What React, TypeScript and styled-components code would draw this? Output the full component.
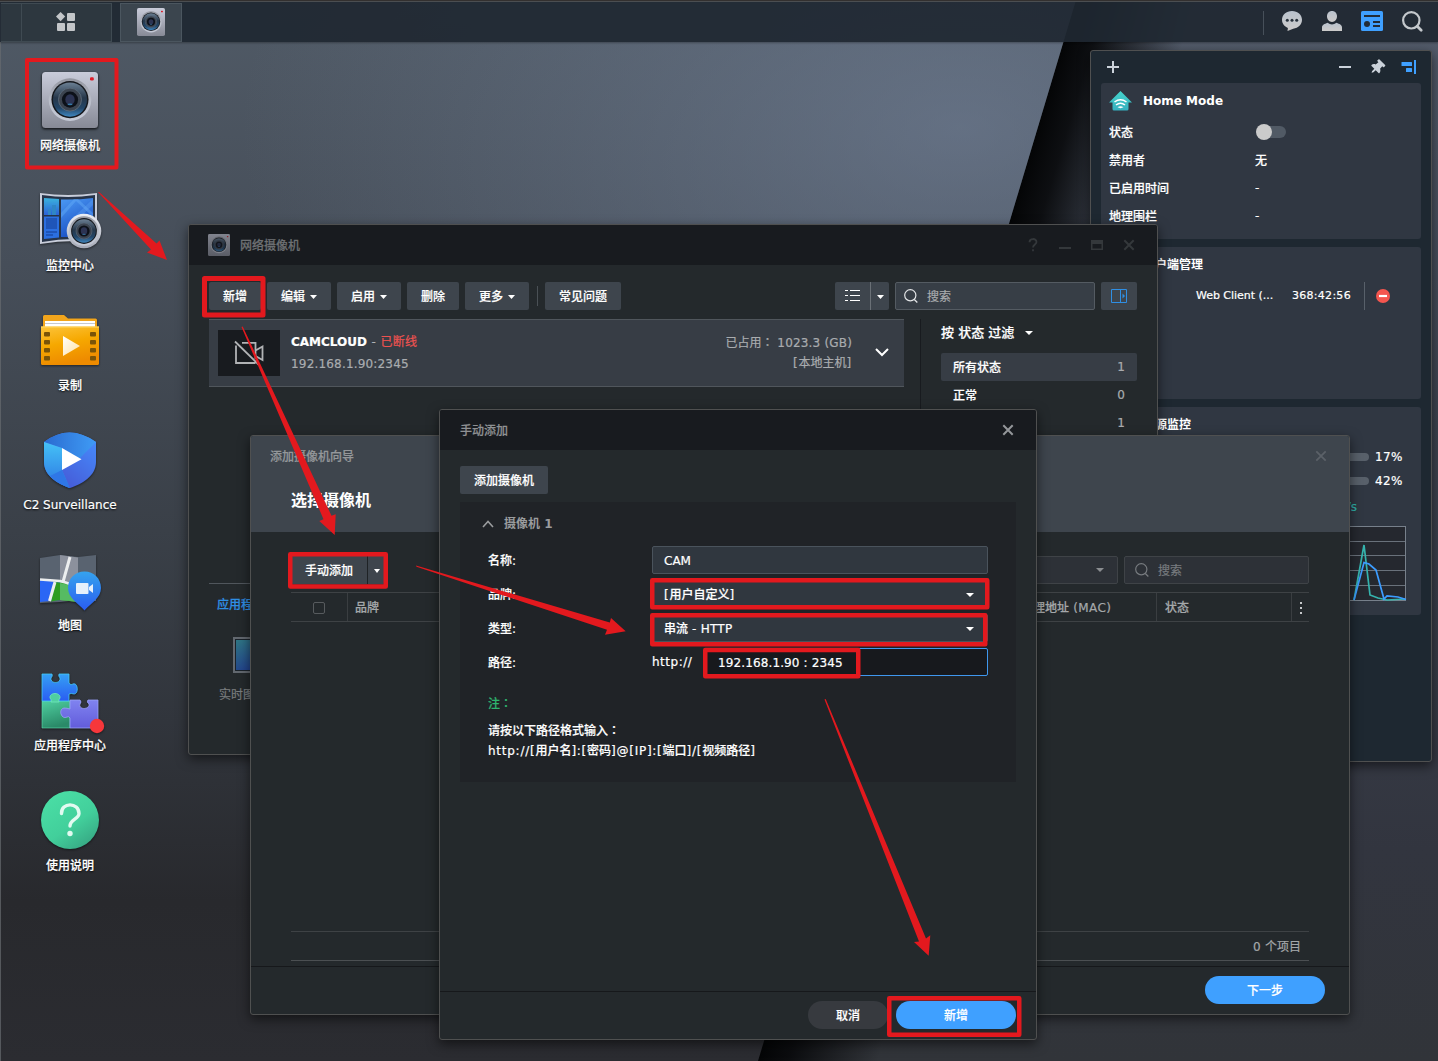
import React from 'react';
import styled, { createGlobalStyle, css } from 'styled-components';
import { FaThumbtack } from 'react-icons/fa';

const RED = '#e3191e';
const BLUE = '#3fa0ff';

const GlobalStyle = createGlobalStyle`
  *, *::before, *::after { box-sizing: border-box; }
  body {
    margin: 0;
    overflow: hidden;
    background: #2a2c30;
    font-family: "DejaVu Sans", "Noto Sans CJK SC", sans-serif;
    font-size: 12px;
    line-height: 20px;
    color: #fff;
    -webkit-text-stroke: 0.2px;
  }
  button, input { font: inherit; color: inherit; }
  svg { display: block; flex: none; overflow: visible; }
`;

/* ---------- desktop ---------- */

const Desktop = styled.div`
  position: relative;
  width: 1438px;
  height: 1061px;
  overflow: hidden;
  display: flex;
  flex-direction: column;
`;

const WallpaperSvg = styled.svg`
  position: absolute;
  inset: 0;
`;

const Taskbar = styled.header`
  position: relative;
  display: flex;
  height: 42px;
  flex: none;
  padding: 2px 14px 0 1px;
  border-top: 1px solid #33302f;
  background: rgba(31, 40, 50, 0.93);
  box-shadow: 0 1px 2px rgba(0, 0, 0, 0.3), inset 0 1px 0 #4b4e51;
`;

const TaskCell = styled.div<{ $w: number; $active?: boolean; $gap?: number }>`
  width: ${p => p.$w}px;
  margin-right: ${p => p.$gap ?? 0}px;
  padding: 0 ${p => (p.$active ? 0 : 2)}px 2px 0;
  display: flex;
  align-items: center;
  justify-content: center;
  border: 1px solid ${p => (p.$active ? '#4b565f' : '#3f4a52')};
  border-left-width: ${p => (p.$active ? 1 : 0)}px;
  background: ${p => (p.$active ? '#3b454e' : '#2d373f')};
`;

const Tray = styled.div`
  margin-left: auto;
  display: flex;
  align-items: center;
  gap: 16px;
  padding: 0 0 3px 17px;
  &::before {
    content: '';
    width: 1px;
    height: 24px;
    margin-top: 3px;
    background: #47505a;
  }
`;

const IconColumn = styled.nav`
  position: relative;
  display: flex;
  flex-direction: column;
  width: 140px;
  padding-top: 18px;
`;

const Shortcut = styled.div`
  height: 120px;
  padding-top: 8px;
  display: flex;
  flex-direction: column;
  align-items: center;
  svg { filter: drop-shadow(0 1px 1px rgba(0, 0, 0, 0.5)); }
`;

const ShortcutLabel = styled.span<{ $latin: boolean }>`
  margin-top: ${p => (p.$latin ? 3 : 4)}px;
  font-weight: 500;
  white-space: nowrap;
  text-shadow: 0 1px 2px rgba(0, 0, 0, 0.9);
`;

/* ---------- windows ---------- */

const Window = styled.section<{ $x: number; $y: number; $w: number; $h: number; $bg?: string }>`
  position: absolute;
  left: ${p => p.$x}px;
  top: ${p => p.$y}px;
  width: ${p => p.$w}px;
  height: ${p => p.$h}px;
  display: flex;
  flex-direction: column;
  overflow: hidden;
  border: 1px solid #4f5050;
  border-radius: 3px;
  background: ${p => p.$bg ?? '#24292c'};
  box-shadow: 0 4px 12px rgba(0, 0, 0, 0.55);
`;

const TitleBar = styled.header<{ $light?: boolean; $left?: number }>`
  flex: none;
  display: flex;
  align-items: center;
  gap: 10px;
  height: 40px;
  padding: 0 22px 0 ${p => p.$left ?? 19}px;
  background: ${p => (p.$light ? '#3e454d' : '#181b1f')};
  font-weight: 500;
`;

const Title = styled.span<{ $color?: string }>`
  margin-right: auto;
  padding-top: 1px;
  color: ${p => p.$color ?? '#a1a3a5'};
`;

const WindowControls = styled.div`
  display: flex;
  align-items: center;
  gap: 20px;
  color: #34383b;
`;

const Toolbar = styled.div`
  display: flex;
  align-items: center;
  gap: 6px;
  height: 28px;
  flex: none;
`;

const Button = styled.button<{ $w?: number }>`
  height: 28px;
  width: ${p => (p.$w ? `${p.$w}px` : 'auto')};
  padding: 1px ${p => (p.$w ? 0 : 14)}px 0;
  display: flex;
  align-items: center;
  justify-content: center;
  gap: 5px;
  flex: none;
  border: 0;
  border-radius: 2px;
  background: #3e454d;
  color: #fff;
  font-weight: 500;
  white-space: nowrap;
`;

const Split = styled.div`
  display: flex;
  height: 28px;
  flex: none;
  border-radius: 2px;
  overflow: hidden;
  ${Button} { border-radius: 0; }
`;

const SplitArrow = styled(Button)<{ $line: string }>`
  border-left: 1px solid ${p => p.$line};
`;

const PillButton = styled.button<{ $w: number; $primary?: boolean }>`
  width: ${p => p.$w}px;
  height: 28px;
  padding: 1px 0 0;
  border: 0;
  border-radius: 14px;
  background: ${p => (p.$primary ? BLUE : '#373a3f')};
  color: #fff;
  font-weight: 500;
`;

const Separator = styled.i`
  width: 1px;
  height: 20px;
  margin: 0 1px 0 2px;
  background: #4a5055;
`;

const Spacer = styled.div`
  flex: 1;
`;

const SearchBox = styled.div<{ $w: number; $dim?: boolean }>`
  display: flex;
  align-items: center;
  gap: 9px;
  width: ${p => p.$w}px;
  height: 28px;
  flex: none;
  padding: 1px ${p => (p.$dim ? 10 : 8)}px 0;
  border: 1px solid ${p => (p.$dim ? '#3f4347' : '#545b62')};
  border-radius: 2px;
  background: ${p => (p.$dim ? '#2d3137' : '#373e46')};
  color: ${p => (p.$dim ? '#777b7f' : '#a8abad')};
  svg { margin-top: -1px; }
`;

/* ---------- camera list ---------- */

const MainBody = styled.div`
  flex: 1;
  display: flex;
  flex-direction: column;
  padding: 17px 20px 0 20px;
`;

const MainColumns = styled.div`
  flex: 1;
  display: flex;
  margin-top: 9px;
`;

const ListPane = styled.div`
  width: 695px;
  display: flex;
  flex-direction: column;
`;

const CameraRow = styled.div`
  display: flex;
  align-items: center;
  height: 68px;
  flex: none;
  padding: 0 15px 0 9px;
  border: solid #50565c;
  border-width: 1px 0;
  background: #373d45;
  & > svg { margin-top: -2px; }
`;

const Thumb = styled.div`
  width: 62px;
  height: 46px;
  margin-right: 11px;
  display: flex;
  align-items: center;
  justify-content: center;
  background: #181b1f;
`;

const Lines = styled.div<{ $right?: boolean }>`
  display: flex;
  flex-direction: column;
  gap: ${p => (p.$right ? 0 : 2)}px;
  margin-bottom: ${p => (p.$right ? 2 : 1)}px;
  color: #a9acaf;
  ${p =>
    p.$right &&
    css`
      margin-left: auto;
      margin-right: 23px;
      text-align: right;
    `}
`;

const CameraName = styled.div`
  color: #b0b3b5;
  white-space: pre;
  word-spacing: 0.8px;
  b { color: #fff; }
  em { font-style: normal; color: #ee5250; letter-spacing: 0.2px; }
`;

const Latin = styled.span<{ $ls?: number }>`
  letter-spacing: ${p => p.$ls ?? 0.18}px;
`;

/* Widens only the ASCII runs of a mixed string. */
const Mixed = ({ text, ls }: { text: string; ls: number }) => (
  <span>
    {text.split(/([\x20-\x7e]+)/).map((run, i) => (i % 2 ? <Latin key={i} $ls={ls}>{run}</Latin> : run))}
  </span>
);

/* Full-width punctuation that sits in the middle of its box. */
const MidColon = styled.span`
  font-family: "Noto Sans CJK TC", sans-serif;
`;

const DetailPane = styled.div`
  margin-top: 196px;
  height: 171px;
  border-top: 1px solid #50565c;
  padding: 11px 8px;
  display: flex;
  flex-direction: column;
`;

const DetailTab = styled.div`
  color: #2f8fe4;
  font-weight: 500;
`;

const DetailItem = styled.div`
  display: flex;
  flex-direction: column;
  width: 72px;
  margin: 22px 0 0 2px;
  color: #797c7e;
  gap: 12px;
  svg { margin-left: 14px; }
`;

const FilterPane = styled.div`
  flex: 1;
  margin-left: 16px;
  padding-left: 20px;
  border-left: 1px solid #181b1f;
`;

const FilterTitle = styled.div`
  display: flex;
  align-items: center;
  gap: 11px;
  height: 28px;
  margin-bottom: 6px;
  font-size: 13px;
  font-weight: 500;
`;

const FilterRow = styled.div<{ $on?: boolean }>`
  display: flex;
  justify-content: space-between;
  align-items: center;
  height: 28px;
  padding: 0 12px;
  border-radius: 2px;
  font-weight: 500;
  background: ${p => (p.$on ? '#373d45' : 'transparent')};
`;

const FilterName = styled.span`
  padding-top: 1px;
`;

const FilterCount = styled.span`
  color: #a9acaf;
`;

/* ---------- wizard ---------- */

const WizardHead = styled.div`
  flex: none;
  height: 56px;
  padding: 13px 40px;
  background: #3e454d;
  font-size: 16px;
  font-weight: 700;
  line-height: 24px;
  -webkit-text-stroke: 0;
`;

const WizardBody = styled.div`
  flex: 1;
  display: flex;
  flex-direction: column;
  padding: 24px 40px 5px 40px;
`;

const Combo = styled.div`
  display: flex;
  justify-content: flex-end;
  align-items: center;
  width: 160px;
  height: 28px;
  padding-right: 13px;
  border: 1px solid #3f4347;
  border-radius: 2px;
  background: #2d3137;
  color: #8b8e91;
`;

const TableHead = styled.div`
  display: grid;
  grid-template-columns: 56px 656px 153px 135px 18px;
  height: 30px;
  margin-top: 8px;
  flex: none;
  border: solid #3e4245;
  border-width: 1px 0;
  color: #a5a8aa;
  font-weight: 500;
`;

const Th = styled.div<{ $center?: boolean; $left?: number }>`
  display: flex;
  align-items: center;
  justify-content: ${p => (p.$center ? 'center' : 'flex-start')};
  padding-left: ${p => (p.$center ? 0 : p.$left ?? 8)}px;
  padding-top: 1px;
  white-space: nowrap;
  & + & { border-left: 1px solid #3a3e41; }
`;

const CheckBox = styled.i`
  width: 12px;
  height: 12px;
  border: 1px solid #575b5e;
  border-radius: 2px;
`;

const Paging = styled.div`
  margin-top: auto;
  height: 30px;
  display: flex;
  align-items: center;
  justify-content: flex-end;
  padding: 1px 8px 0 0;
  border: solid #3e4245;
  border-width: 1px 0;
  border-bottom-color: #4b4f52;
  color: #a5a8aa;
`;

const Footer = styled.footer<{ $pad: number }>`
  flex: none;
  display: flex;
  justify-content: flex-end;
  gap: 8px;
  height: 48px;
  padding: 9px ${p => p.$pad}px 0;
  border-top: 1px solid #16181b;
`;

/* ---------- manual dialog ---------- */

const DialogBody = styled.div`
  flex: 1;
  display: flex;
  flex-direction: column;
  align-items: flex-start;
  gap: 8px;
  padding: 16px 20px 0 20px;
`;

const FormPanel = styled.div`
  align-self: stretch;
  height: 280px;
  padding: 8px 28px;
  background: #202327;
  font-weight: 500;
`;

const FormLegend = styled.div`
  display: flex;
  align-items: center;
  gap: 9px;
  height: 28px;
  margin-left: -6px;
  margin-bottom: 5px;
  color: #9a9c9e;
  font-weight: 700;
  -webkit-text-stroke: 0;
  svg { margin-right: 1px; }
`;

const FormRow = styled.div`
  display: flex;
  align-items: center;
  height: 34px;
`;

const FormLabel = styled.label`
  width: 164px;
  padding-top: 1px;
`;

const Field = styled.div<{ $focus?: boolean }>`
  flex: 1;
  display: flex;
  align-items: center;
  justify-content: space-between;
  height: 28px;
  padding: 1px 13px 0 ${p => (p.$focus ? 13 : 11)}px;
  border: 1px solid ${p => (p.$focus ? '#3f97ee' : '#4a535c')};
  border-radius: 2px;
  background: ${p => (p.$focus ? '#17191d' : '#30373f')};
  white-space: pre;
`;

const Prefix = styled.span`
  width: 52px;
  letter-spacing: 0.5px;
`;

const Note = styled.div`
  margin-top: 14px;
  strong { display: block; font-weight: 500; color: #2fb56f; margin-bottom: 6px; }
  p { margin: 0; white-space: nowrap; }
`;

/* ---------- widgets ---------- */

const WidgetHead = styled.div`
  display: flex;
  align-items: center;
  height: 32px;
  flex: none;
  padding: 0 15px;
  gap: 18px;
  color: #cbd2da;
`;

const PinIcon = styled(FaThumbtack)`
  width: 14px;
  height: 15px;
  transform: rotate(45deg);
`;

const WidgetCard = styled.div<{ $h: number }>`
  flex: none;
  height: ${p => p.$h}px;
  margin: 0 10px 8px;
  padding: 4px 8px;
  border-radius: 3px;
  background: #303742;
  font-weight: 500;
`;

const CardTitle = styled.div<{ $mb?: number }>`
  display: flex;
  align-items: center;
  gap: 11px;
  height: 28px;
  margin-bottom: ${p => p.$mb ?? 0}px;
  font-weight: 700;
  -webkit-text-stroke: 0;
`;

const InfoRow = styled.div`
  display: grid;
  grid-template-columns: 146px 1fr;
  align-items: center;
  height: 28px;
`;

const InfoText = styled.span`
  padding-top: 1px;
`;

const Toggle = styled.i`
  width: 29px;
  height: 12px;
  margin-left: 2px;
  border-radius: 6px;
  background: #515a65;
  display: flex;
  align-items: center;
  &::before {
    content: '';
    width: 16px;
    height: 16px;
    margin-left: -1px;
    border-radius: 50%;
    background: #cbcbcb;
  }
`;

const ClientRow = styled.div`
  display: flex;
  align-items: center;
  height: 28px;
  margin-top: 3px;
  padding-left: 87px;
  font-size: 11px;
  font-weight: 400;
  i { width: 1px; height: 28px; margin: 0 11px 0 13px; background: #58606a; }
`;

const ClientName = styled.span`
  width: 96px;
  letter-spacing: -0.03px;
`;

const UsageRow = styled.div`
  display: grid;
  grid-template-columns: 70px 1fr 38px;
  align-items: center;
  height: 24px;
  font-weight: 400;
`;

const Meter = styled.i`
  height: 8px;
  margin-right: 6px;
  border-radius: 4px;
  background: #58606a;
`;

const Rate = styled.div`
  height: 28px;
  margin-bottom: 5px;
  padding-right: 56px;
  text-align: right;
  color: #2fb0aa;
  font-weight: 400;
  line-height: 28px;
`;

const AnnotationSvg = styled.svg`
  position: absolute;
  inset: 0;
  pointer-events: none;
`;

/* ---------- icons ---------- */

const Caret = ({ color = '#fff', w = 7 }: { color?: string; w?: number }) => (
  <svg width={w} height={4} viewBox="0 0 8 4" preserveAspectRatio="none"><path d="M0 0h8L4 4z" fill={color} /></svg>
);

const Close = ({ color = 'currentColor', sw = 2 }: { color?: string; sw?: number }) => (
  <svg width="12" height="12" viewBox="0 0 12 12"><path d="M1.300 1.300l9.400 9.400M10.700 1.300l-9.400 9.400" stroke={color} strokeWidth={sw} /></svg>
);

const Search = ({ size = 14, color = '#e4e6e8', sw = 1.2 }: { size?: number; color?: string; sw?: number }) => (
  <svg width={size} height={size} viewBox="0 0 14 14" fill="none" stroke={color} strokeWidth={sw}>
    <circle cx="6.300" cy="6.300" r="5.600" /><path d="M10.300 10.500l3 3" />
  </svg>
);

const Lens = ({ cx, cy, r }: { cx: number; cy: number; r: number }) => (
  <g>
    <circle cx={cx} cy={cy} r={r} fill="url(#ringG)" />
    <circle cx={cx} cy={cy} r={r * 0.87} fill="#15181d" />
    <circle cx={cx} cy={cy} r={r * 0.8} fill="url(#lensG)" />
    <circle cx={cx} cy={cy} r={r * 0.54} fill="#3c4450" />
    <circle cx={cx} cy={cy} r={r * 0.54} fill="none" stroke="#5d6d7e" strokeWidth={r * 0.04} />
    <circle cx={cx} cy={cy} r={r * 0.38} fill="#0d1119" />
    <ellipse cx={cx} cy={cy} rx={r * 0.22} ry={r * 0.25} fill="#2c3352" />
    <ellipse cx={cx} cy={cy + r * 0.22} rx={r * 0.12} ry={r * 0.04} fill="#3579a8" />
  </g>
);

const CameraIcon = ({ size, dim }: { size: number; dim?: boolean }) => (
  <svg width={size} height={size} viewBox="0 0 56 56" opacity={dim ? 0.6 : 1}>
    <rect width="56" height="56" rx="3.500" fill="url(#bodyG)" />
    <Lens cx={28} cy={27.6} r={21.3} />
    <rect x="48" y="5.300" width="3.800" height="3.200" rx="1.200" fill="#dd1c28" />
  </svg>
);

const Defs = () => (
  <svg width="0" height="0" style={{ position: 'absolute' }}>
    <defs>
      <linearGradient id="bodyG" x2="0" y2="1"><stop stopColor="#c9ccda" /><stop offset="1" stopColor="#878a96" /></linearGradient>
      <linearGradient id="ringG" x2="0" y2="1"><stop stopColor="#92959f" /><stop offset=".5" stopColor="#b9bdc8" /><stop offset="1" stopColor="#c4c9d6" /></linearGradient>
      <linearGradient id="ringW" x2="0" y2="1"><stop stopColor="#eceff5" /><stop offset="1" stopColor="#a5a9b6" /></linearGradient>
      <linearGradient id="lensG" x2="0" y2="1"><stop stopColor="#6b7f93" /><stop offset=".45" stopColor="#26374a" /><stop offset=".75" stopColor="#234668" /><stop offset="1" stopColor="#3f86bf" /></linearGradient>
      <linearGradient id="wallG" x2=".4" y2="1"><stop stopColor="#4c9bf5" /><stop offset="1" stopColor="#1a4fc4" /></linearGradient>
      <linearGradient id="cyanG" x2="0" y2="1"><stop stopColor="#3bb2dd" /><stop offset="1" stopColor="#2b62d8" /></linearGradient>
      <linearGradient id="liveG" x2=".5" y2="1"><stop stopColor="#2f7684" /><stop offset="1" stopColor="#213f8c" /></linearGradient>
      <linearGradient id="folderG" x2=".3" y2="1"><stop stopColor="#fcc43b" /><stop offset=".5" stopColor="#f6a800" /><stop offset="1" stopColor="#ee8b00" /></linearGradient>
      <linearGradient id="playG" x2="1" y2="1"><stop stopColor="#fff" /><stop offset="1" stopColor="#ffe0a0" /></linearGradient>
      <linearGradient id="shA"><stop stopColor="#2a6bd0" /><stop offset="1" stopColor="#3f9bf5" /></linearGradient>
      <linearGradient id="shB" x2="0" y2="1"><stop stopColor="#45c2f7" /><stop offset="1" stopColor="#2c76e2" /></linearGradient>
      <linearGradient id="shC" x1="1" x2=".2" y2="1"><stop stopColor="#4690ff" /><stop offset="1" stopColor="#4654d2" /></linearGradient>
      <linearGradient id="pinG" x2="0" y2="1"><stop stopColor="#35a3ee" /><stop offset="1" stopColor="#2a5cf0" /></linearGradient>
      <linearGradient id="pzB" x2="0" y2="1"><stop stopColor="#35a0f5" /><stop offset="1" stopColor="#2a5df2" /></linearGradient>
      <linearGradient id="pzG" x2=".3" y2="1"><stop stopColor="#4fcfa0" /><stop offset="1" stopColor="#2a8a68" /></linearGradient>
      <linearGradient id="pzP" x2="0" y2="1"><stop stopColor="#8083f0" /><stop offset="1" stopColor="#625cdb" /></linearGradient>
      <linearGradient id="helpG" x1=".1" x2=".8" y2="1"><stop stopColor="#4be0a6" /><stop offset=".6" stopColor="#42cf9b" /><stop offset="1" stopColor="#36a582" /></linearGradient>
      <linearGradient id="homeG" x2="0" y2="1"><stop stopColor="#45d3cb" /><stop offset="1" stopColor="#35b0bf" /></linearGradient>
      <linearGradient id="trayG" x2="0" y2="1"><stop stopColor="#b9c2cd" /><stop offset="1" stopColor="#cdcbca" /></linearGradient>
    </defs>
  </svg>
);

const DesktopIcon = ({ children }: { children: React.ReactNode }) => (
  <svg width="64" height="64" viewBox="0 0 64 64">{children}</svg>
);

const MonitorCenterIcon = () => (
  <DesktopIcon>
    <path d="M2 5Q30 9 59 5V54Q30 51 2 56z" fill="#c9cedb" />
    <path d="M4 7Q30 11 57 7V52Q30 49 4 54z" fill="#273449" />
    <path d="M6 10l15 1v16H6z" fill="url(#cyanG)" />
    <path d="M10 21h3v6h-3zM14 17h4v10h-4z" fill="#2f86c6" />
    <path d="M6 28.500h15v21l-15 1.500z" fill="#2b6fe0" />
    <path d="M8 30h11v11H8zM8 43h11v2H8zM8 46h7v2H8z" fill="#1f55b8" />
    <path d="M23 11.500Q40 12 55 10V49H23z" fill="url(#wallG)" />
    <path d="M23 30L38 13l17 16v-4L40 11h-4L23 25z" fill="#69b1fb" opacity=".4" />
    <path d="M55 11L37 28l3 3 15-14z" fill="#69b1fb" opacity=".3" />
    <circle cx="46" cy="43" r="17.300" fill="url(#ringW)" />
    <Lens cx={46} cy={43} r={14.8} />
  </DesktopIcon>
);

const RecordingIcon = () => (
  <DesktopIcon>
    <path d="M5 8.500Q5 7 6.500 7H26l4 3.500H57.500Q59 10.500 59 12v8H5z" fill="#f2a51c" />
    <path d="M7 13h50v8H7z" fill="#fff" /><path d="M7 15h50v1H7z" fill="#c7c9cf" />
    <path d="M3 18.500h58V55.500q0 1.500-1.500 1.500H4.500Q3 57 3 55.500z" fill="url(#folderG)" />
    <path d="M3 18.500h58v1H3z" fill="#ffd768" />
    {[24, 32, 40, 48].map(y => (
      <g key={y} fill="#7a5408">
        <rect x="6" y={y} width="6" height="4.500" rx="1" /><rect x="52" y={y} width="6" height="4.500" rx="1" />
      </g>
    ))}
    <path d="M25 28l17 10-17 10z" fill="url(#playG)" />
  </DesktopIcon>
);

const ShieldIcon = () => (
  <DesktopIcon>
    <path d="M6 14Q31-5 58 14V34C58 48 44 56 32 60 20 56 6 48 6 34z" fill="url(#shC)" />
    <path d="M6 14Q31-5 58 14L41 31 24 20z" fill="url(#shA)" />
    <path d="M6 14l18 6v22l8 18C20 56 6 48 6 34z" fill="url(#shB)" />
    <path d="M24 42l-12 6Q20 56 31.500 60z" fill="#2f77e6" />
    <path d="M24 20l19.500 11.200L24 42z" fill="#fff" />
  </DesktopIcon>
);

const MapIcon = () => (
  <DesktopIcon>
    <path d="M2 10l20-3 18 2 18-2v46l-18-1-18 2-20 1z" fill="#596370" />
    <path d="M22 7l18 2.500V54l-18-2z" fill="#8c919d" />
    <path d="M2 32l20 2v18L2 54z" fill="#2a66f5" />
    <path d="M17 34l10 1 13 5v14l-18-2-9 1.500z" fill="#2e9c22" />
    <path d="M22 35l18 4 3 15-21-2z" fill="#56bb62" />
    <path d="M2 31.500l20 1.500q12 3 18 7" stroke="#eceeef" strokeWidth="2.600" fill="none" />
    <path d="M32 9L25 34M17 34L11.500 53" stroke="#eceeef" strokeWidth="3" fill="none" />
    <path d="M46.500 23.500c9.500 0 16.500 7 16.500 16.500 0 10-10 15-16.500 22.500C40 55 30 50 30 40c0-9.500 7-16.500 16.500-16.500z" fill="url(#pinG)" />
    <rect x="38" y="35" width="12.500" height="11" rx="1" fill="#e6f0fb" />
    <path d="M51 39l4-3v9l-4-3z" fill="#e6f0fb" />
  </DesktopIcon>
);

const PuzzleIcon = () => (
  <DesktopIcon>
    <path d="M4 33H32V60H4z" fill="url(#pzG)" stroke="#5fe0b0" strokeWidth=".6" />
    <path d="M4 6h10q1 2-1 4c-1 6 10 6 9 0q-2-2-1-4h10v9q2 3 4 1c5-2 6 10 1 10q-3-1-5 0v7H4z" fill="url(#pzB)" stroke="#45c9f5" strokeWidth=".8" />
    <path d="M13 34q1-2-1-4c-1-6 11-6 10 0q-2 2-1 4z" fill="#4fcfa0" stroke="#72e8bd" strokeWidth=".8" />
    <path d="M32 32h10q2 2 0 4c-2 6 10 6 9 0q-3-2-1-4h10v28H32V50q-1-2-3-1c-6 3-9-8-3-9q3 0 6 1z" fill="url(#pzP)" stroke="#9aa2f7" strokeWidth=".8" />
    <circle cx="59" cy="58" r="7.200" fill="#f6373b" />
  </DesktopIcon>
);

const HelpIcon = () => (
  <DesktopIcon>
    <circle cx="32" cy="32" r="29" fill="url(#helpG)" />
    <path d="M23.500 25.500C23 14 41 14 41 25.500 41 31 32 31.500 32 38" stroke="#e2faf1" strokeWidth="3.400" strokeLinecap="round" fill="none" />
    <circle cx="32" cy="45.500" r="2.700" fill="#e2faf1" />
  </DesktopIcon>
);

const HomeIcon = () => (
  <svg width="23" height="20" viewBox="0 0 23 20">
    <path d="M11.500 0L23 11.500h-3.500V18q0 1.500-1.500 1.500H5Q3.500 19.500 3.500 18v-6.500H0z" fill="url(#homeG)" />
    <g fill="none" stroke="#fff" strokeWidth="1.500"><path d="M5.500 11q6-4.500 12 0M7 14q4.500-3.500 9 0" /></g>
    <path d="M8.500 16.300q3-2 6 0l-3 1z" fill="#fff" />
  </svg>
);

const ClientsIcon = () => (
  <svg width="23" height="18" viewBox="0 0 23 18" fill="none" stroke="#45b9e6" strokeWidth="2"><rect x="1" y="1" width="21" height="12" rx="1" /><path d="M6 17h11" /></svg>
);

const PulseIcon = () => (
  <svg width="23" height="18" viewBox="0 0 23 18" fill="none" stroke="#4fcf8a" strokeWidth="2"><path d="M0 10h6l3-8 5 14 3-6h6" /></svg>
);

const shortcuts: [string, React.ReactNode][] = [
  ['网络摄像机', <DesktopIcon key="c"><g transform="translate(4 4)"><CameraIcon size={56} /></g></DesktopIcon>],
  ['监控中心', <MonitorCenterIcon key="m" />],
  ['录制', <RecordingIcon key="r" />],
  ['C2 Surveillance', <ShieldIcon key="s" />],
  ['地图', <MapIcon key="p" />],
  ['应用程序中心', <PuzzleIcon key="z" />],
  ['使用说明', <HelpIcon key="h" />],
];

/* ---------- page parts ---------- */

const Wallpaper = () => (
  <WallpaperSvg width="1438" height="1061" viewBox="0 0 1438 1061">
    <defs>
      <linearGradient id="paper" x2="0" y2="1">
        <stop stopColor="#505a66" /><stop offset=".25" stopColor="#464e59" /><stop offset=".5" stopColor="#3a4048" />
        <stop offset=".68" stopColor="#31353c" /><stop offset=".85" stopColor="#28292d" /><stop offset="1" stopColor="#2b2c31" />
      </linearGradient>
      <radialGradient id="glow" gradientUnits="userSpaceOnUse" cx="960" cy="120" r="720" gradientTransform="matrix(1 0 0 .6 0 56)">
        <stop stopColor="#7887a0" stopOpacity=".55" /><stop offset="1" stopColor="#75849a" stopOpacity="0" />
      </radialGradient>
      <linearGradient id="under" x2="0" y2="1">
        <stop stopColor="#545d6c" /><stop offset=".4" stopColor="#3d434f" /><stop offset=".8" stopColor="#32353f" /><stop offset="1" stopColor="#313439" />
      </linearGradient>
      <linearGradient id="shade" gradientUnits="userSpaceOnUse" x1="1040" y1="120" x2="1150" y2="153">
        <stop stopColor="#040506" /><stop offset=".25" stopColor="#08090b" stopOpacity=".92" /><stop offset="1" stopColor="#08090b" stopOpacity="0" />
      </linearGradient>
    </defs>
    <rect width="1438" height="1061" fill="url(#under)" />
    <rect width="1438" height="1061" fill="url(#shade)" />
    <path d="M0 0H1076L758 1061H0z" fill="url(#paper)" />
    <path d="M0 0H1076L758 1061H0z" fill="url(#glow)" />
    <path d="M.5 0V1061" stroke="#686c70" opacity=".7" />
  </WallpaperSvg>
);

const WidgetPanel = () => (
  <Window $x={1090} $y={50} $w={342} $h={712} $bg="#1e2831">
    <WidgetHead>
      <svg width="14" height="14" viewBox="0 0 14 14"><path d="M7 1v12M1 7h12" stroke="currentColor" strokeWidth="2" /></svg>
      <Spacer />
      <svg width="14" height="14" viewBox="0 0 14 14"><path d="M1 7h12" stroke="currentColor" strokeWidth="2" /></svg>
      <PinIcon />
      <svg width="14" height="14" viewBox="0 0 14 14" fill={BLUE}><rect x="-.500" y="2" width="10.500" height="4" rx=".600" /><rect x="4" y="8" width="6" height="4" rx=".600" /><path d="M12 0h2v14h-2z" /></svg>
    </WidgetHead>
    <WidgetCard $h={156}>
      <CardTitle $mb={3}><HomeIcon />Home Mode</CardTitle>
      <InfoRow><InfoText>状态</InfoText><Toggle /></InfoRow>
      <InfoRow><InfoText>禁用者</InfoText><InfoText>无</InfoText></InfoRow>
      <InfoRow><InfoText>已启用时间</InfoText><span>-</span></InfoRow>
      <InfoRow><InfoText>地理围栏</InfoText><span>-</span></InfoRow>
    </WidgetCard>
    <WidgetCard $h={152}>
      <CardTitle><ClientsIcon />客户端管理</CardTitle>
      <ClientRow>
        <ClientName>Web Client (...</ClientName>
        <Latin $ls={0.28}>368:42:56</Latin>
        <i />
        <svg width="14" height="14" viewBox="0 0 14 14"><circle cx="7" cy="7" r="7" fill="#f4564f" /><path d="M3 7h8" stroke="#fff" strokeWidth="2.200" /></svg>
      </ClientRow>
    </WidgetCard>
    <WidgetCard $h={208}>
      <CardTitle $mb={6}><PulseIcon />资源监控</CardTitle>
      <UsageRow><span>CPU</span><Meter /><Latin $ls={0.4}>17%</Latin></UsageRow>
      <UsageRow><span>内存</span><Meter /><Latin $ls={0.4}>42%</Latin></UsageRow>
      <Rate>KB/s</Rate>
      <svg width="296" height="75" viewBox="1109 526 296 75" fill="none">
        <rect x="1110" y="526.500" width="295.500" height="74" fill="#25282f" stroke="#77808b" />
        <path d="M1110 541.500h295M1110 555.500h295M1110 570.500h295M1110 585.500h295" stroke="#69717b" />
        <path d="M1354 600l10-55 6 50 8 3 9 2 18-1" stroke="#35b3ad" strokeWidth="1.700" />
        <path d="M1354 600l10-37.500 5 1.500 7 6 8 29 3-3 11 1 8 2.500" stroke="#3c9cff" strokeWidth="1.700" />
      </svg>
    </WidgetCard>
  </Window>
);

const MainWindow = () => (
  <Window $x={188} $y={224} $w={970} $h={531}>
    <TitleBar>
      <CameraIcon size={22} dim />
      <Title $color="#6d7073">网络摄像机</Title>
      <WindowControls>
        <svg width="12" height="14" viewBox="0 0 12 14" fill="none" stroke="currentColor" strokeWidth="1.800"><path d="M2.500 4.200C2.500 0 9.500 0 9.500 4 9.500 6.500 6 6.500 6 9.500M6 11.300v2" /></svg>
        <svg width="12" height="12" viewBox="0 0 12 12"><path d="M0 9h12" stroke="currentColor" strokeWidth="2" /></svg>
        <svg width="12" height="10" viewBox="0 0 12 10"><path d="M0 0h12v10H0zM1.500 4v4.500h9V4z" fill="currentColor" fillRule="evenodd" /></svg>
        <Close />
      </WindowControls>
    </TitleBar>
    <MainBody>
      <Toolbar>
        <Button>新增</Button>
        <Button>编辑 <Caret /></Button>
        <Button>启用 <Caret /></Button>
        <Button>删除</Button>
        <Button>更多 <Caret /></Button>
        <Separator />
        <Button>常见问题</Button>
        <Spacer />
        <Split>
          <Button $w={35} aria-label="list">
            <svg width="15" height="12" viewBox="0 0 15 12" stroke="#fff" strokeWidth="1"><path d="M0 .5h3M5 .5h10M0 5.500h3M5 5.500h10M0 10.500h3M5 10.500h10" transform="translate(0 -1)" /></svg>
          </Button>
          <SplitArrow $w={19} $line="#6a7076"><Caret /></SplitArrow>
        </Split>
        <SearchBox $w={200}><Search />搜索</SearchBox>
        <Button $w={36} aria-label="panel">
          <svg width="16" height="14" viewBox="0 0 16 14" fill="none" stroke="#2f8fe4"><path d="M.5-.5h15v13H.5zM9.500-.5v13" /><path d="M11.500 3.500v5l2.500-2.500z" fill="#2f8fe4" stroke="none" /></svg>
        </Button>
      </Toolbar>
      <MainColumns>
        <ListPane>
          <CameraRow>
            <Thumb>
              <svg width="30" height="24" viewBox="0 0 30 24" fill="none" stroke="#b1b3b5" strokeWidth="1.800"><path d="M2 4.500V22h19.500M8 1.800h13.500V18M21.500 9.500l7-4v13.500l-7-4M1 .5l23.500 23" /></svg>
            </Thumb>
            <Lines>
              <CameraName><b>CAMCLOUD</b> - <em>已断线</em></CameraName>
              <Latin>192.168.1.90:2345</Latin>
            </Lines>
            <Lines $right>
              <div>已占用<MidColon>：</MidColon> <Latin>1023.3 (GB)</Latin></div>
              <div><Mixed text="[本地主机]" ls={0.8} /></div>
            </Lines>
            <svg width="14" height="9" viewBox="0 0 14 9"><path d="M1 1l6 6 6-6" stroke="#fff" strokeWidth="2" fill="none" /></svg>
          </CameraRow>
          <DetailPane>
            <DetailTab>应用程序</DetailTab>
            <DetailItem>
              <svg width="40" height="36" viewBox="0 0 40 36"><rect width="40" height="36" fill="#62686f" /><rect x="2" y="2" width="36" height="32" fill="#1b232b" /><rect x="3" y="3" width="34" height="30" fill="url(#liveG)" /></svg>
              实时图像
            </DetailItem>
          </DetailPane>
        </ListPane>
        <FilterPane>
          <FilterTitle>按 状态 过滤 <Caret w={8} /></FilterTitle>
          <FilterRow $on><FilterName>所有状态</FilterName><FilterCount>1</FilterCount></FilterRow>
          <FilterRow><FilterName>正常</FilterName><FilterCount>0</FilterCount></FilterRow>
          <FilterRow><FilterName>已断线</FilterName><FilterCount>1</FilterCount></FilterRow>
        </FilterPane>
      </MainColumns>
    </MainBody>
  </Window>
);

const Wizard = () => (
  <Window $x={250} $y={435} $w={1100} $h={580}>
    <TitleBar $light>
      <Title $color="#94979a">添加摄像机向导</Title>
      <WindowControls><Close color="#5b6168" sw={1.8} /></WindowControls>
    </TitleBar>
    <WizardHead>选择摄像机</WizardHead>
    <WizardBody>
      <Toolbar>
        <Split>
          <Button $w={76}>手动添加</Button>
          <SplitArrow $w={18} $line="#1f2326"><Caret w={6} /></SplitArrow>
        </Split>
        <Spacer />
        <Combo><Caret color="#8b8e91" w={8} /></Combo>
        <SearchBox $w={185} $dim><Search color="#777b7f" />搜索</SearchBox>
      </Toolbar>
      <TableHead>
        <Th $center><CheckBox /></Th>
        <Th $left={7}>品牌</Th>
        <Th $left={17}><Mixed text="物理地址 (MAC)" ls={0.4} /></Th>
        <Th>状态</Th>
        <Th $center><svg width="2" height="12" viewBox="0 0 2 12"><path d="M0 0h2v2H0zM0 5h2v2H0zM0 10h2v2H0z" fill="#c6c8ca" /></svg></Th>
      </TableHead>
      <Paging><Mixed text="0 个项目" ls={0.3} /></Paging>
    </WizardBody>
    <Footer $pad={24}><PillButton $w={120} $primary>下一步</PillButton></Footer>
  </Window>
);

const ManualDialog = () => (
  <Window $x={439} $y={409} $w={598} $h={631}>
    <TitleBar $left={20}>
      <Title $color="#8f9193">手动添加</Title>
      <WindowControls><Close color="#94979a" sw={2} /></WindowControls>
    </TitleBar>
    <DialogBody>
      <Button>添加摄像机</Button>
      <FormPanel>
        <FormLegend>
          <svg width="12" height="8" viewBox="0 0 12 8"><path d="M1 7l5-5.500L11 7" stroke="#9a9c9e" strokeWidth="1.600" fill="none" /></svg>
          摄像机 1
        </FormLegend>
        <FormRow><FormLabel>名称:</FormLabel><Field>CAM</Field></FormRow>
        <FormRow><FormLabel>品牌:</FormLabel><Field><Mixed text="[用户自定义]" ls={0.8} /><Caret w={8} /></Field></FormRow>
        <FormRow><FormLabel>类型:</FormLabel><Field><Mixed text="串流 - HTTP" ls={0.25} /><Caret w={8} /></Field></FormRow>
        <FormRow>
          <FormLabel>路径:</FormLabel>
          <Prefix>http://</Prefix>
          <Field $focus><Latin $ls={0.12}>192.168.1.90 : 2345</Latin></Field>
        </FormRow>
        <Note>
          <strong>注<MidColon>：</MidColon></strong>
          <p>请按以下路径格式输入<MidColon>：</MidColon></p>
          <p><Mixed text="http://[用户名]:[密码]@[IP]:[端口]/[视频路径]" ls={0.74} /></p>
        </Note>
      </FormPanel>
    </DialogBody>
    <Footer $pad={20}>
      <PillButton $w={80}>取消</PillButton>
      <PillButton $w={120} $primary>新增</PillButton>
    </Footer>
  </Window>
);

/* Highlight frames: outer x, y, right, bottom, stroke. */
const frames = [
  [25, 58, 118.5, 169.5, 4],
  [202, 276, 265.5, 317.5, 5],
  [288, 552, 388, 588.7, 4.5],
  [650, 578, 989.5, 609.5, 4.5],
  [650, 613, 987.5, 646.5, 4.5],
  [703, 647.7, 860.5, 678.5, 4.5],
  [887, 996, 1021.5, 1037, 4.5],
];

const arrows = [
  '98,192 99,192 156.500,243.500 159.500,240.500 167,260 147,252.500 151,249.500',
  '241.500,327 242.700,326.500 331.500,515.700 335.700,514.300 334.700,535 319.300,521 323.500,519.300',
  '416,565.500 416.500,566.800 607,629.800 605,634.700 625.700,631.300 611,618 609.800,622.500',
  '824.500,699.500 825.700,699 926,938.500 930.300,935.300 928.700,955.700 914,942 919,941.500',
];

const Annotations = () => (
  <AnnotationSvg width="1438" height="1061" viewBox="0 0 1438 1061">
    {frames.map(([x, y, r, b, s]) => (
      <rect key={`${x}-${y}`} x={x + s / 2} y={y + s / 2} width={r - x - s} height={b - y - s} fill="none" stroke={RED} strokeWidth={s} strokeLinejoin="round" />
    ))}
    {arrows.map(points => <polygon key={points} points={points} fill={RED} />)}
  </AnnotationSvg>
);

export default function App() {
  return (
    <>
      <GlobalStyle />
      <Defs />
      <Desktop>
        <Wallpaper />
        <Taskbar>
          <TaskCell $w={21} />
          <TaskCell $w={90} $gap={8}>
            <svg width="19" height="19" viewBox="0 0 19 19" fill="#c3c6c9"><path d="M4.600 0l4.600 4.600-4.600 4.600L0 4.600z" /><rect x="11" y="1" width="8" height="8" rx="1" /><rect x="1" y="11" width="8" height="8" rx="1" /><rect x="11" y="11" width="8" height="8" rx="1" /></svg>
          </TaskCell>
          <TaskCell $w={62} $active><CameraIcon size={28} /></TaskCell>
          <Tray>
            <svg width="24" height="20" viewBox="-2 0 24 20"><path d="M10 0c5.700 0 10 3.800 10 8.800 0 4.600-3.600 8.300-8.800 8.900L5.500 20l.4-3C2.400 15.500 0 12.600 0 8.800 0 3.800 4.300 0 10 0z" fill="url(#trayG)" /><g fill="#27313b"><circle cx="5.300" cy="9.200" r="1.500" /><circle cx="10" cy="9.200" r="1.500" /><circle cx="14.700" cy="9.200" r="1.500" /></g></svg>
            <svg width="24" height="20" viewBox="-2 0 24 20" fill="url(#trayG)"><path d="M10 0c3 0 5 2.200 5 5.300S12.800 11 10 11 5 8.500 5 5.300 7 0 10 0z" /><path d="M0 20v-3.500C0 14 2.500 13 5.500 11.800Q10 15 14.500 11.800C17.500 13 20 14 20 16.500V20z" /></svg>
            <svg width="24" height="20" viewBox="-1 0 24 20"><rect width="22" height="20" rx="1.500" fill={BLUE} /><g fill="#222c36"><path d="M3 4h16v2H3zM12 10h7v2h-7zM12 14h7v2h-7z" /><circle cx="6" cy="13" r="3" /></g></svg>
            <svg width="24" height="20" viewBox="-2 0 24 20" fill="none" stroke="#c4c8cc" strokeWidth="2.200"><circle cx="9.300" cy="9.300" r="8.200" /><path d="M15.200 15.200l4 4" strokeLinecap="round" strokeWidth="2.800" /></svg>
          </Tray>
        </Taskbar>
        <IconColumn>
          {shortcuts.map(([label, icon]) => (
            <Shortcut key={label}>{icon}<ShortcutLabel $latin={label.startsWith('C2')}>{label}</ShortcutLabel></Shortcut>
          ))}
        </IconColumn>
        <WidgetPanel />
        <MainWindow />
        <Wizard />
        <ManualDialog />
        <Annotations />
      </Desktop>
    </>
  );
}
